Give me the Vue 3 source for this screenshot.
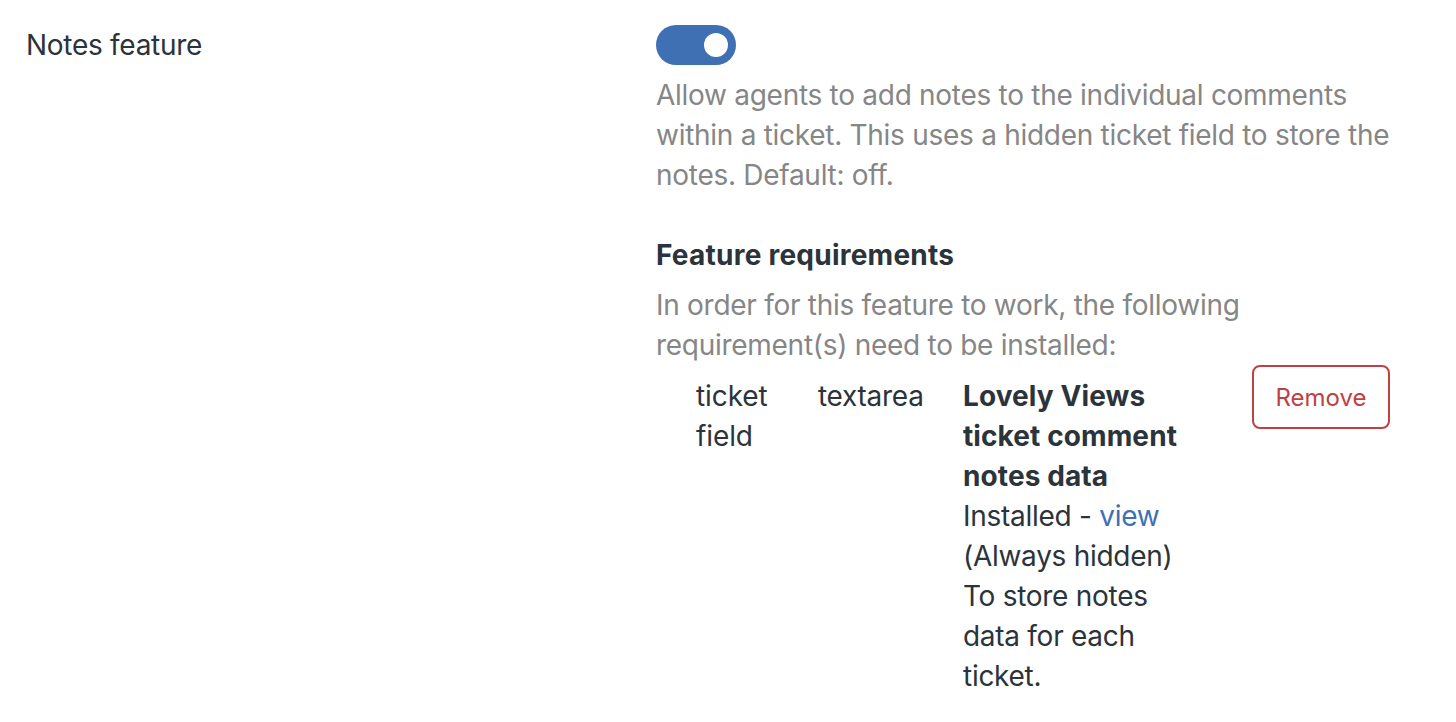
<script setup>
import { ref } from 'vue';

const enabled = ref(true);

const requirements = [
  {
    type: 'ticket field',
    kind: 'textarea',
    title: 'Lovely Views ticket comment notes data',
    visibility: '(Always hidden)',
    purpose: 'To store notes data for each ticket.'
  }
];
</script>

<template>
  <section class="setting">
    <div class="setting-label">Notes feature</div>
    <div class="setting-body">
      <button
        class="toggle"
        :class="{ 'toggle-on': enabled }"
        role="switch"
        :aria-checked="enabled"
        @click="enabled = !enabled"
      >
        <span class="toggle-knob"></span>
      </button>
      <p class="hint">
        Allow agents to add notes to the individual comments within a ticket.
        This uses a hidden ticket field to store the notes. Default: off.
      </p>
      <h4 class="heading">Feature requirements</h4>
      <p class="hint">
        In order for this feature to work, the following requirement(s) need to
        be installed:
      </p>
      <div v-for="item in requirements" :key="item.title" class="requirement">
        <div class="type">{{ item.type }}</div>
        <div class="kind">{{ item.kind }}</div>
        <div class="details">
          <div class="title">{{ item.title }}</div>
          <div>Installed - <a href="#" class="view-link" @click.prevent>view</a></div>
          <div>{{ item.visibility }}</div>
          <div>{{ item.purpose }}</div>
        </div>
        <button class="remove-button">Remove</button>
      </div>
    </div>
  </section>
</template>

<style>
body {
  background: #fff;
}
</style>

<style scoped>
.setting {
  display: flex;
  box-sizing: border-box;
  height: 722px;
  padding: 25px 66px 0 26px;
  font-family: Inter, sans-serif;
  font-size: 28px;
  line-height: 40px;
  letter-spacing: -0.28px;
  color: #2b333b;
}

.setting-label {
  flex: 0 0 630px;
}

.setting-body {
  flex: 1;
  min-width: 0;
}

.toggle {
  display: flex;
  align-items: center;
  width: 80px;
  height: 40px;
  padding: 0 8px;
  border: none;
  border-radius: 20px;
  background: #aaa;
  cursor: pointer;
}

.toggle-on {
  justify-content: flex-end;
  background: #3e70b3;
}

.toggle-knob {
  width: 24px;
  height: 24px;
  border-radius: 50%;
  background: #fff;
}

.hint {
  width: 744px;
  margin: 10px 0 0;
  color: #868686;
}

.heading {
  margin: 40px 0 0;
  font-size: 28px;
  font-weight: 700;
  letter-spacing: 0.24px;
}

.requirement {
  display: flex;
  align-items: flex-start;
}

.type {
  width: 82px;
  margin: 11px 0 0 40px;
  letter-spacing: -0.1px;
}

.kind {
  width: 105px;
  margin: 11px 0 0 40px;
}

.details {
  width: 225px;
  margin: 11px 0 0 40px;
}

.title {
  font-weight: 700;
  letter-spacing: 0.1px;
}

.remove-button {
  box-sizing: border-box;
  width: 138px;
  height: 64px;
  margin-left: auto;
  padding: 0;
  border: 2px solid #bf4143;
  border-radius: 8px;
  background: #fff;
  color: #bf4143;
  font-family: inherit;
  font-size: 24px;
  cursor: pointer;
}

.view-link {
  color: #3e70b3;
  text-decoration: none;
}
</style>
